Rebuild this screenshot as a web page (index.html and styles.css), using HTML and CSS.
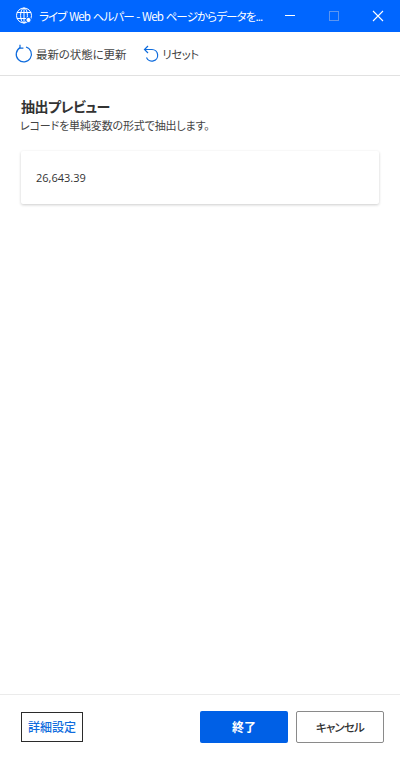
FILE: index.html
```html
<!DOCTYPE html>
<html lang="ja">
<head>
<meta charset="utf-8">
<title>ライブ Web ヘルパー</title>
<link rel="stylesheet" href="styles.css">
</head>
<body>
<div class="window">
  <header class="titlebar">
    <svg class="globe" width="18" height="18" viewBox="0 0 18 18" fill="none" stroke="#fff" stroke-width="1">
      <circle cx="9" cy="8.5" r="7.5"/>
      <ellipse cx="9" cy="8.5" rx="3.4" ry="7.5"/>
      <path d="M2 5.5h14M2 11.5h14M9 1v15"/>
      <circle cx="13.5" cy="13" r="2.6" fill="#fff" stroke="#0066ff"/>
    </svg>
    <span class="title">ライブ Web ヘルパー - Web ページからデータを...</span>
    <div class="winctrls">
      <svg class="ctrl" width="44" height="32" viewBox="0 0 44 32"><path d="M17 15.5h10" stroke="#fff" stroke-width="1"/></svg>
      <svg class="ctrl" width="44" height="32" viewBox="0 0 44 32"><rect x="17.5" y="11.5" width="9" height="9" fill="none" stroke="#5c95f0" stroke-width="1"/></svg>
      <svg class="ctrl" width="44" height="32" viewBox="0 0 44 32"><path d="M17 11l10 10M27 11l-10 10" stroke="#fff" stroke-width="1.1"/></svg>
    </div>
  </header>
  <nav class="toolbar">
    <button class="tool">
      <svg width="18" height="20" viewBox="0 0 18 20" fill="none" stroke="#0f6cdd" stroke-width="1.2">
        <path d="M5.2 3.6A7.6 7.6 0 1 0 11 3"/>
        <path d="M5 0.8v3.4h3.4" />
      </svg>
      <span>最新の状態に更新</span>
    </button>
    <button class="tool tight">
      <svg width="16" height="18" viewBox="0 0 16 18" fill="none" stroke="#0f6cdd" stroke-width="1.2">
        <path d="M1.5 4.5H9a5.8 5.8 0 1 1-5.5 8"/>
        <path d="M5 1L1.5 4.5 5 8"/>
      </svg>
      <span>リセット</span>
    </button>
  </nav>
  <main class="content">
    <h1 class="heading">抽出プレビュー</h1>
    <p class="sub">レコードを単純変数の形式で抽出します。</p>
    <div class="card">26,643.39</div>
  </main>
  <footer class="footer">
    <button class="btn-link">詳細設定</button>
    <div class="actions">
      <button class="btn primary">終了</button>
      <button class="btn secondary">キャンセル</button>
    </div>
  </footer>
</div>
</body>
</html>
```
FILE: styles.css
```css
* { box-sizing: border-box; }
html, body { margin: 0; height: 100%; background: #fff; }
body { font-family: "Noto Sans CJK JP", "Open Sans", sans-serif; color: #333; overflow: hidden; font-feature-settings: "palt"; }
button { font-family: inherit; font-feature-settings: inherit; padding: 0; background: none; border: 0; }
.window { display: flex; flex-direction: column; height: 759px; }
.titlebar { flex: 0 0 32px; background: #0066ff; display: flex; align-items: center; padding-left: 15px; color: #fff; }
.globe { flex: none; }
.title { margin-left: 6px; font-size: 11.5px; letter-spacing: -0.9px; word-spacing: 1px; line-height: 32px; white-space: nowrap; flex: 1; min-width: 0; }
.winctrls { display: flex; flex: none; }
.ctrl { display: block; }
.toolbar { flex: 0 0 44px; border-bottom: 1px solid #e1e1e1; display: flex; align-items: center; padding: 0 0 0 15px; gap: 17px; }
.tool { display: flex; align-items: center; gap: 3px; font-size: 11.5px; letter-spacing: -0.1px; color: #444; white-space: nowrap; }
.tool.tight { letter-spacing: -0.5px; }
.tool svg { display: block; }
.content { flex: 1; padding: 21px 21px 0; }
.heading { margin: 0; font-size: 14px; letter-spacing: -0.5px; line-height: 18px; font-weight: 700; color: #333; }
.sub { margin: 2px 0 0 -1px; font-size: 11px; letter-spacing: -0.15px; line-height: 16px; color: #444; }
.card { margin-top: 18px; height: 53px; padding-left: 15px; display: flex; align-items: center; font-size: 11px; font-family: "Open Sans", sans-serif; color: #333; border-radius: 2px; background: #fff; box-shadow: 0 1px 3px rgba(0,0,0,.2); }
.footer { flex: 0 0 65px; border-top: 1px solid #ebebeb; display: flex; justify-content: space-between; align-items: center; padding: 0 16px 0 21px; }
.btn-link { width: 62px; height: 30px; border: 1px solid #2b2b2b; color: #0f6cdd; font-size: 12px; font-weight: 500; line-height: 26px; }
.actions { display: flex; gap: 8px; }
.btn { width: 88px; height: 32px; border-radius: 2px; font-size: 12px; font-weight: 700; line-height: 28px; }
.primary { background: #0060e6; color: #fff; }
.secondary { background: #fff; border: 1px solid #8a8a8a; color: #333; font-size: 11.5px; font-weight: 500; letter-spacing: -0.8px; }
```
